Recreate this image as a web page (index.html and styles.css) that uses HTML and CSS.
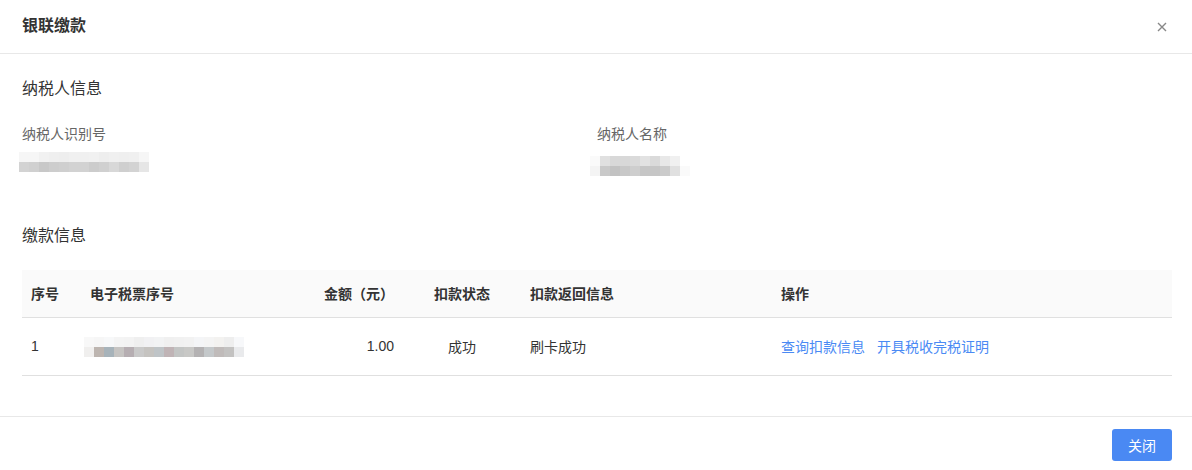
FILE: index.html
```html
<!DOCTYPE html>
<html lang="zh-CN">
<head>
  <meta charset="UTF-8">
  <meta name="viewport" content="width=device-width, initial-scale=1.0">
  <title>银联缴款</title>
  <link rel="stylesheet" href="styles.css">
</head>
<body>

<div class="modal">
  <!-- Header -->
  <div class="modal-header">
    <span class="modal-title">银联缴款</span>
    <span class="modal-close">
      <svg width="10" height="10" viewBox="0 0 10 10">
        <path d="M1 1L9 9M9 1L1 9" stroke="#888" stroke-width="1.4" fill="none"/>
      </svg>
    </span>
  </div>

  <div class="modal-body">
    <div class="section-title">纳税人信息</div>

    <div class="info-grid">
      <div class="info-item">
        <div class="info-label">纳税人识别号</div>
        <div class="mosaic mosaic-id"></div>
      </div>
      <div class="info-item">
        <div class="info-label">纳税人名称</div>
        <div class="mosaic mosaic-name"></div>
      </div>
    </div>

    <div class="section-title section-pay">缴款信息</div>

    <table class="pay-table">
      <thead>
        <tr>
          <th class="col-no">序号</th>
          <th class="col-ticket">电子税票序号</th>
          <th class="col-amount">金额（元）</th>
          <th class="col-status">扣款状态</th>
          <th class="col-msg">扣款返回信息</th>
          <th class="col-ops">操作</th>
        </tr>
      </thead>
      <tbody>
        <tr>
          <td class="col-no">1</td>
          <td class="col-ticket"><div class="mosaic mosaic-ticket"></div></td>
          <td class="col-amount">1.00</td>
          <td class="col-status">成功</td>
          <td class="col-msg">刷卡成功</td>
          <td class="col-ops">
            <a class="op-link" href="#">查询扣款信息</a>
            <a class="op-link" href="#">开具税收完税证明</a>
          </td>
        </tr>
      </tbody>
    </table>
  </div>

  <!-- Footer -->
  <div class="modal-footer">
    <button class="btn-primary">关闭</button>
  </div>
</div>

</body>
</html>
```

FILE: styles.css
```css
* {box-sizing: border-box;}
body {
  margin: 0;
  background: #fff;
  font-family: "Liberation Sans", "Noto Sans CJK SC", sans-serif;
  font-size: 14px;
  color: #333;
}

.modal {width: 1192px; height: 470px; background: #fff;}

/* Header */
.modal-header {
  height: 54px;
  padding: 0 22px;
  border-bottom: 1px solid #e8e8e8;
  display: flex;
  align-items: center;
  justify-content: space-between;
}
.modal-title {font-size: 16px; font-weight: bold; color: #333; line-height: 24px; margin-top: -2px;}
.modal-close {width: 10px; height: 10px; display: flex; margin-right: 3px;}

/* Body */
.modal-body {padding: 23px 20px 0 22px; height: 362px;}

.section-title {
  font-size: 16px;
  line-height: 24px;
  color: #333;
}
.section-pay {margin-top: 48px;}

.info-grid {
  display: grid;
  grid-template-columns: 575px 1fr;
  margin-top: 23px;
}
.info-label {font-size: 14px; line-height: 20px; color: #666;}

/* blurred values */
.mosaic {height: 20px;}
.mosaic-id {
  width: 130px;
  margin: 8px 0 0 -3px;
  background:
    linear-gradient(90deg, #f6f6f6 0 20px, #f1f1f1 20px 30px, #efefef 30px 40px, #eeeeee 40px 50px, #f0f0f0 50px 70px, #f1f1f1 70px 80px, #eeeeee 80px 90px, #f0f0f0 90px 100px, #efefef 100px 110px, #f0f0f0 110px 120px, #f6f6f6 120px 130px) top / 100% 10px no-repeat,
    linear-gradient(90deg, #d3d3d3 0 10px, #d0d0d0 10px 20px, #c8c8c8 20px 30px, #cdcdcd 30px 40px, #cfcfcf 40px 50px, #d2d2d2 50px 70px, #cccccc 70px 80px, #d0d0d0 80px 90px, #d8d8d8 90px 100px, #cfcfcf 100px 110px, #d3d3d3 110px 120px, #e6e6e6 120px 130px) bottom / 100% 10px no-repeat;
}
.mosaic-name {
  width: 100px;
  margin: 12px 0 0 -7px;
  background:
    linear-gradient(90deg, #fafafa 0 10px, #e0e0e0 10px 20px, #d8d8d8 20px 40px, #dadada 40px 50px, #e2e2e2 50px 60px, #dadada 60px 70px, #e8e8e8 70px 80px, #f0f0f0 80px 90px, #fff 90px 100px) top / 100% 10px no-repeat,
    linear-gradient(90deg, #f4f4f4 0 10px, #c9c9c9 10px 20px, #c2c2c2 20px 30px, #c8c8c8 30px 40px, #cecece 40px 50px, #c6c6c6 50px 70px, #cbcbcb 70px 80px, #e0e0e0 80px 90px, #fafafa 90px 100px) bottom / 100% 10px no-repeat;
}
.mosaic-ticket {
  width: 160px;
  margin: 1px 0 0 -6px;
  background:
    linear-gradient(90deg, #f8f8f8 0 10px, #f6f6f6 10px 20px, #f7f8f9 20px 30px, #f4f4f4 30px 40px, #f3f3f3 40px 50px, #efefef 50px 60px, #f1f1f3 60px 70px, #f2f3f4 70px 80px, #f0f0f0 80px 90px, #f1f1f1 90px 100px, #f2f2f2 100px 110px, #f4f5f7 110px 120px, #f4f4f4 120px 130px, #f3f2f0 130px 140px, #eeeeee 140px 150px, #f7f8fa 150px 160px) top / 100% 10px no-repeat,
    linear-gradient(90deg, #f0efee 0 10px, #bdb5b0 10px 20px, #a7b3ba 20px 30px, #c6c4c2 30px 40px, #b6aeb2 40px 50px, #c9c9c9 50px 60px, #c5c3c0 60px 70px, #bfc4c7 70px 80px, #c0b4b6 80px 90px, #c3c5c4 90px 100px, #c8c8c6 100px 110px, #b4b2b3 110px 120px, #c4c8ca 120px 130px, #c0bbba 130px 140px, #c3c2c1 140px 150px, #e9eaec 150px 160px) bottom / 100% 10px no-repeat;
}

/* Table */
.pay-table {
  width: 1150px;
  margin-top: 22px;
  border-collapse: collapse;
  table-layout: fixed;
}
.pay-table th, .pay-table td {
  padding: 0 8px;
  text-align: left;
  border-bottom: 1px solid #e0e0e0;
  font-size: 14px;
}
.pay-table th {
  height: 47px;
  background: #fafafa;
  font-weight: bold;
  color: #333;
}
.pay-table td {height: 58px; color: #333;}

.col-no {width: 60px; padding-left: 9px !important;}
.col-ticket {width: 200px;}
.col-amount {width: 120px; text-align: right !important;}
.col-status {width: 120px; text-align: center !important;}
.col-msg {width: 251px;}
.col-ops {width: 399px;}

.op-link {color: #4a8af4; text-decoration: none; margin-right: 8px;}

/* Footer */
.modal-footer {
  border-top: 1px solid #e8e8e8;
  padding: 12px 20px 0 0;
  display: flex;
  justify-content: flex-end;
}
.btn-primary {
  width: 60px;
  height: 32px;
  border: none;
  border-radius: 3px;
  background: #4a89f3;
  color: #fff;
  font-family: "Liberation Sans", "Noto Sans CJK SC", sans-serif;
  font-size: 14px;
  cursor: pointer;
}
```
